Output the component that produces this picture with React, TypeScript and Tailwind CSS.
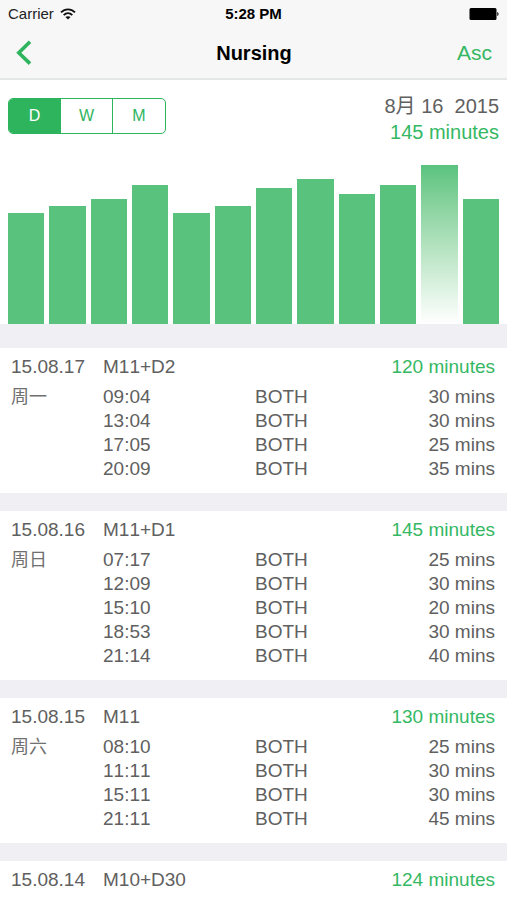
type Feed = { time: string; side: string; mins: number };
type Day = { date: string; weekday?: string; age: string; total: number; feeds: Feed[] };

const both = (time: string, mins: number): Feed => ({ time, side: "BOTH", mins });

const days: Day[] = [
  {
    date: "15.08.17",
    weekday: "周一",
    age: "M11+D2",
    total: 120,
    feeds: [both("09:04", 30), both("13:04", 30), both("17:05", 25), both("20:09", 35)],
  },
  {
    date: "15.08.16",
    weekday: "周日",
    age: "M11+D1",
    total: 145,
    feeds: [both("07:17", 25), both("12:09", 30), both("15:10", 20), both("18:53", 30), both("21:14", 40)],
  },
  {
    date: "15.08.15",
    weekday: "周六",
    age: "M11",
    total: 130,
    feeds: [both("08:10", 25), both("11:11", 30), both("15:11", 30), both("21:11", 45)],
  },
  { date: "15.08.14", age: "M10+D30", total: 124, feeds: [] },
];

const bars = [111, 118, 125, 139, 111, 118, 136, 145, 130, 139, 159, 125];
const selectedBar = 10;

function StatusBar() {
  return (
    <div className="grid h-7 grid-cols-3 items-center px-2 text-[15px] text-black">
      <div className="flex items-center gap-[6px]">
        <span className="text-[#222]">Carrier</span>
        <svg className="h-3 w-4" viewBox="0 0 16 12" fill="none" stroke="#111" strokeWidth="1.9" aria-label="Wi-Fi">
          <path d="M1 4.4C5 .3 11 .3 15 4.4" />
          <path d="M3.7 7.1c2.5-2.4 6.1-2.4 8.6 0" />
          <path d="M8 11.6 5.4 9.1c1.5-1.3 3.7-1.3 5.2 0z" fill="#111" stroke="none" />
        </svg>
      </div>
      <span className="text-center font-bold">5:28 PM</span>
      <svg className="h-3 w-[30px] justify-self-end" viewBox="0 0 30 12" aria-label="Battery full">
        <rect x="0.5" y="0" width="27" height="12" rx="1.5" fill="#000" />
        <path d="M28.3 4c1.6.3 1.6 3.7 0 4z" fill="#000" />
      </svg>
    </div>
  );
}

function NavBar() {
  return (
    <nav className="grid h-[50px] grid-cols-3 items-center pr-[15px] pl-4">
      <button type="button" aria-label="Back" className="justify-self-start">
        <svg className="h-[26px] w-4" viewBox="0 0 16 26" fill="none" stroke="#2fb45e" strokeWidth="3.6">
          <path d="M14 1.8 2.8 12.7 14 23.6" />
        </svg>
      </button>
      <h1 className="text-center text-[20px] font-bold text-black">Nursing</h1>
      <button type="button" className="justify-self-end text-[21px] text-[#35b864]">
        Asc
      </button>
    </nav>
  );
}

function RangeToggle() {
  const base = "w-[52px] text-[16px]";
  return (
    <div
      role="group"
      aria-label="Range"
      className="mt-[5px] flex h-9 divide-x divide-[#2fb45e] overflow-hidden rounded-[5px] border border-[#2fb45e]"
    >
      <button type="button" aria-pressed="true" className={`${base} bg-[#2fb45e] text-white`}>
        D
      </button>
      <button type="button" aria-pressed="false" className={`${base} text-[#2fb45e]`}>
        W
      </button>
      <button type="button" aria-pressed="false" className={`${base} text-[#2fb45e]`}>
        M
      </button>
    </div>
  );
}

function Summary() {
  return (
    <section className="bg-white px-2 pt-[13px]">
      <div className="flex items-start justify-between">
        <RangeToggle />
        <div className="text-right text-[20px] leading-[26px]">
          <p className="whitespace-pre">{"8月 16  2015"}</p>
          <p className="text-[#35b864]">145 minutes</p>
        </div>
      </div>
      <div className="mt-5 grid grid-cols-12 items-end gap-[5px]">
        {bars.map((height, i) => (
          <div
            key={i}
            className={i === selectedBar ? "bg-linear-to-b from-[#59c37e] to-white" : "bg-[#59c37e]"}
            style={{ height }}
          />
        ))}
      </div>
    </section>
  );
}

function DayTable({ day }: { day: Day }) {
  return (
    <section className="bg-white pt-[7px] pr-3 pl-[11px] last:grow">
      <table className="w-full table-fixed text-left text-[19px] leading-6">
        <colgroup>
          <col className="w-[92px]" />
          <col className="w-[152px]" />
          <col />
          <col />
        </colgroup>
        <thead>
          <tr>
            <th className="p-0 font-normal">{day.date}</th>
            <th className="p-0 font-normal" colSpan={2}>
              {day.age}
            </th>
            <th className="p-0 text-right font-normal text-[#35b864]">{day.total} minutes</th>
          </tr>
        </thead>
        {day.feeds.length > 0 && (
          <tbody className="before:block before:h-[6px]">
            {day.feeds.map((feed, i) => (
              <tr key={feed.time}>
                {i === 0 && (
                  <td rowSpan={day.feeds.length} className="p-0 align-top text-[18px] leading-6 text-[#707070]">
                    {day.weekday}
                  </td>
                )}
                <td className="p-0">{feed.time}</td>
                <td className="p-0">{feed.side}</td>
                <td className="p-0 text-right">{feed.mins} mins</td>
              </tr>
            ))}
          </tbody>
        )}
      </table>
      {day.feeds.length > 0 && <div className="h-3" />}
    </section>
  );
}

export default function App() {
  return (
    <div className="flex min-h-screen flex-col bg-[#efeff4] font-['Liberation_Sans','Noto_Sans_CJK_SC',sans-serif] text-[#606060] [font-kerning:none]">
      <header className="border-b-2 border-[#e4e7e7] bg-[#f7f7f7]">
        <StatusBar />
        <NavBar />
      </header>
      <Summary />
      <main className="mt-6 flex grow flex-col gap-[18px]">
        {days.map((day) => (
          <DayTable key={day.date} day={day} />
        ))}
      </main>
    </div>
  );
}
